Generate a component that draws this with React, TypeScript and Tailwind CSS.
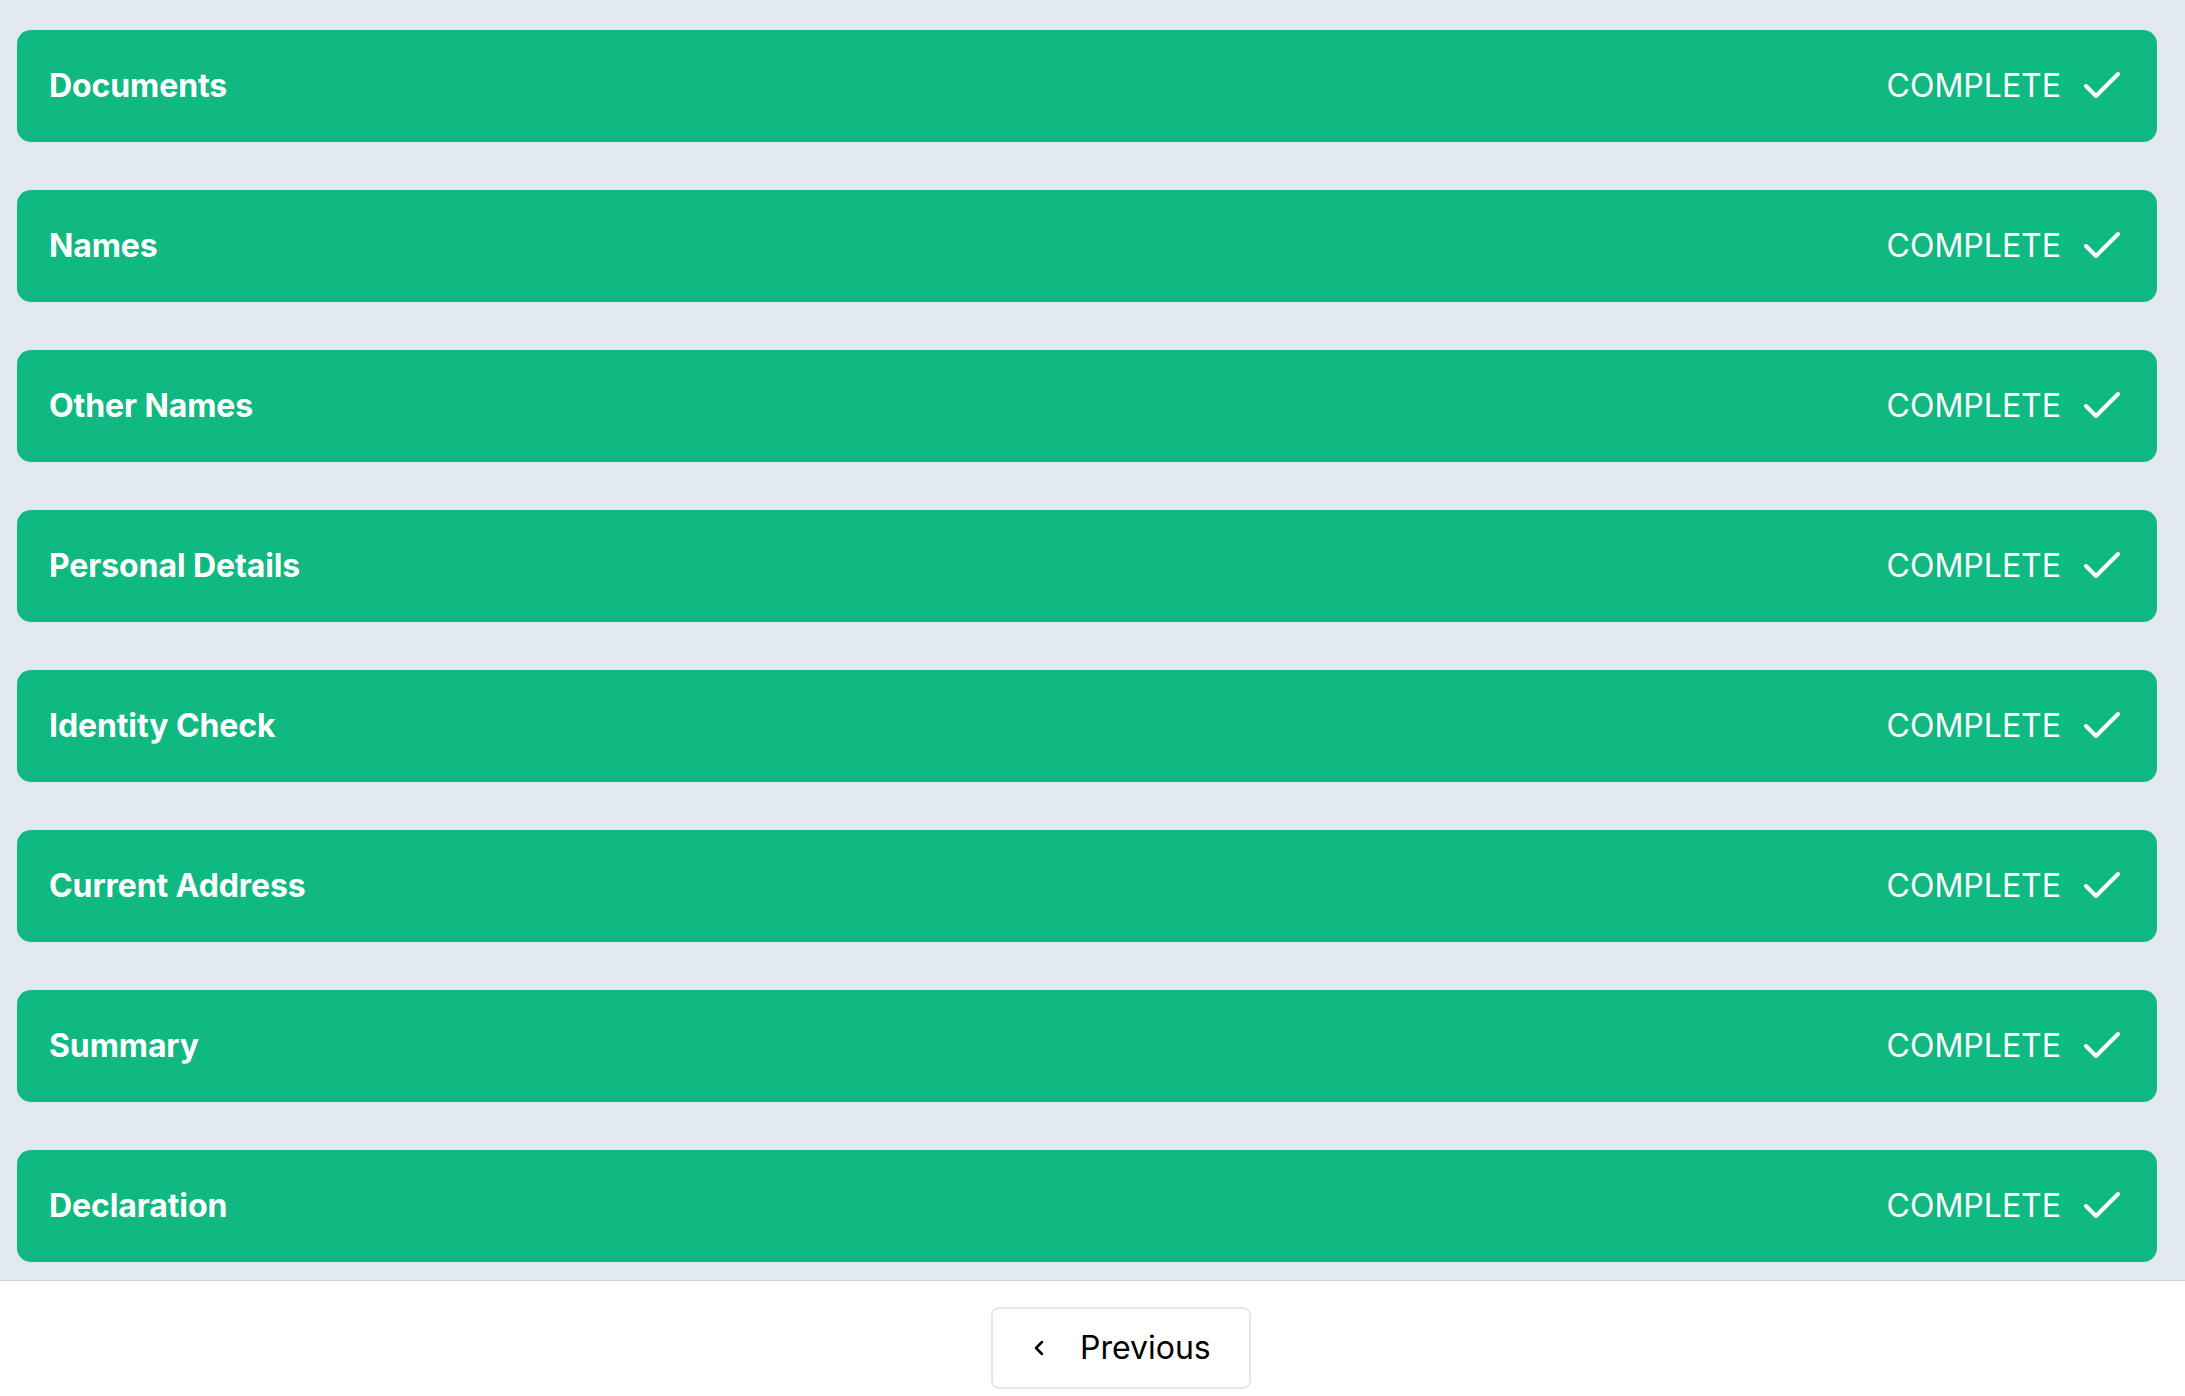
import React from 'react';
import { Check, ChevronLeft } from 'lucide-react';

const sections = [
  'Documents',
  'Names',
  'Other Names',
  'Personal Details',
  'Identity Check',
  'Current Address',
  'Summary',
  'Declaration',
];

const SectionRow: React.FC<{ title: string }> = ({ title }) => (
  <div className="h-[112px] rounded-[14px] bg-[#10b981] flex items-center justify-between pl-[32px] pr-[31px] text-white">
    <span className="text-[32px] font-bold tracking-[-0.1px]">{title}</span>
    <div className="flex items-center gap-[17px]">
      <span className="text-[32px] font-normal">COMPLETE</span>
      <Check className="w-12 h-12" strokeWidth={2} />
    </div>
  </div>
);

export default function App() {
  return (
    <div
      className="h-[1396px] flex flex-col bg-white"
      style={{ fontFamily: 'Inter, "Noto Sans", sans-serif' }}
    >
      {/* steps */}
      <div className="flex-1 bg-[#e2e8f0] pt-[30px] pb-[18px] pl-[17px] pr-[28px] flex flex-col gap-[48px] border-b border-[#d1d5db]">
        {sections.map((s) => (
          <SectionRow key={s} title={s} />
        ))}
      </div>

      {/* footer */}
      <div className="h-[115px] flex justify-center items-start pt-[26px] pl-[57px]">
        <button className="h-[82px] w-[260px] flex items-center pl-[34px] gap-[29px] rounded-lg border-2 border-[#e5e7eb] bg-white text-black">
          <ChevronLeft className="w-6 h-6" strokeWidth={2.5} />
          <span className="text-[32px] font-normal">Previous</span>
        </button>
      </div>
    </div>
  );
}
